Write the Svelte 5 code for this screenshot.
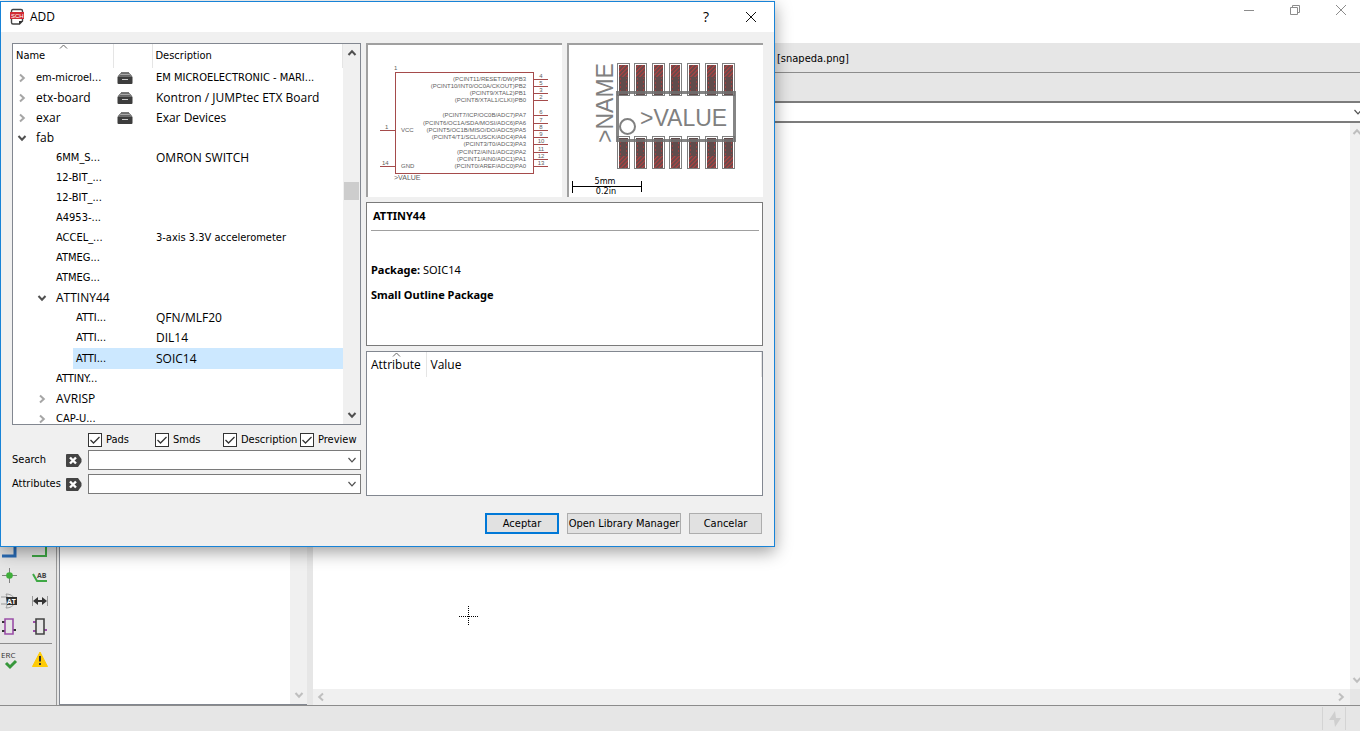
<script>
  const rows = [
    { name: 'em-microel...', level: 0, toggle: 'closed', lib: true, desc: 'EM MICROELECTRONIC - MARI...', small: true },
    { name: 'etx-board', level: 0, toggle: 'closed', lib: true, desc: 'Kontron / JUMPtec ETX Board' },
    { name: 'exar', level: 0, toggle: 'closed', lib: true, desc: 'Exar Devices' },
    { name: 'fab', level: 0, toggle: 'open' },
    { name: '6MM_S...', level: 1, desc: 'OMRON SWITCH' },
    { name: '12-BIT_...', level: 1 },
    { name: '12-BIT_...', level: 1 },
    { name: 'A4953-...', level: 1 },
    { name: 'ACCEL_...', level: 1, desc: '3-axis 3.3V accelerometer', small: true },
    { name: 'ATMEG...', level: 1 },
    { name: 'ATMEG...', level: 1 },
    { name: 'ATTINY44', level: 1, toggle: 'open' },
    { name: 'ATTI...', level: 2, desc: 'QFN/MLF20' },
    { name: 'ATTI...', level: 2, desc: 'DIL14' },
    { name: 'ATTI...', level: 2, desc: 'SOIC14', selected: true },
    { name: 'ATTINY...', level: 1 },
    { name: 'AVRISP', level: 1, toggle: 'closed' },
    { name: 'CAP-U...', level: 1, toggle: 'closed' }
  ];

  const pins = [
    [34, '(PCINT11/RESET/DW)PB3', '4'],
    [41, '(PCINT10/INT0/OC0A/CKOUT)PB2', '5'],
    [48, '(PCINT9/XTAL2)PB1', '3'],
    [55, '(PCINT8/XTAL1/CLKI)PB0', '2'],
    [70, '(PCINT7/ICP/OC0B/ADC7)PA7', '6'],
    [78, '(PCINT6/OC1A/SDA/MOSI/ADC6)PA6', '7'],
    [85, '(PCINT5/OC1B/MISO/DO/ADC5)PA5', '8'],
    [92, '(PCINT4/T1/SCL/USCK/ADC4)PA4', '9'],
    [99, '(PCINT3/T0/ADC3)PA3', '10'],
    [107, '(PCINT2/AIN1/ADC2)PA2', '11'],
    [114, '(PCINT1/AIN0/ADC1)PA1', '12'],
    [121, '(PCINT0/AREF/ADC0)PA0', '13']
  ];

  const padXs = [48, 65, 83, 100, 118, 136, 153];
  let filters = $state([
    { label: 'Pads', on: true },
    { label: 'Smds', on: true },
    { label: 'Description', on: true },
    { label: 'Preview', on: true }
  ]);
  const fields = ['Search', 'Attributes'];
</script>

{#snippet chevron(dir)}
  <svg class="chev" width="10" height="10" viewBox="0 0 10 10" aria-hidden="true">
    {#if dir === 'up'}<path d="M1.5 7 5 3.2 8.5 7" />
    {:else if dir === 'down'}<path d="M1.5 3 5 6.8 8.5 3" />
    {:else if dir === 'left'}<path d="M7 1.5 3.2 5 7 8.5" />
    {:else}<path d="M3 1.5 6.8 5 3 8.5" />{/if}
  </svg>
{/snippet}

<div class="app">
  <header class="titlebar">
    <button aria-label="Minimize"><svg width="12" height="12"><path d="M1 6.5h10" /></svg></button>
    <button aria-label="Restore"><svg width="12" height="12"><path d="M1.5 3.5h7v7h-7zM3.5 3.5v-2h7v7h-2" /></svg></button>
    <button aria-label="Close"><svg width="12" height="12"><path d="M1 1l10 10M11 1L1 11" /></svg></button>
  </header>
  <div class="bar path"><span>[snapeda.png]</span></div>
  <div class="bar tools"></div>
  <div class="command">
    <input type="text" aria-label="Command line" />
    <button aria-label="Command history">{@render chevron('down')}</button>
  </div>

  <div class="workspace">
    <nav class="toolbox">
      <div class="tool-grid">
        <button aria-label="Bus"><svg width="20" height="20" viewBox="0 0 20 20"><path d="M2 15h13V0" fill="none" stroke="#2a6db8" stroke-width="3" /></svg></button>
        <button aria-label="Net"><svg width="20" height="20" viewBox="0 0 20 20"><path d="M2 15h14V0" fill="none" stroke="#3fa845" stroke-width="2" /></svg></button>
        <button aria-label="Junction"><svg width="20" height="20" viewBox="0 0 20 20"><path d="M9.500 2v15M2 9.500h15" stroke="#808080" /><circle cx="9.500" cy="9.500" r="3.300" fill="#3fae3a" /></svg></button>
        <button aria-label="Label"><svg width="20" height="20" viewBox="0 0 20 20"><path d="M3 8l4 7h10" fill="none" stroke="#3fa845" stroke-width="2" /><text x="7" y="12" font-size="7" font-weight="bold" fill="#444">AB</text></svg></button>
        <button aria-label="Attribute"><svg width="20" height="20" viewBox="0 0 20 20"><path d="M1 6h6M1 13h6M6 3c6 0 9 4 9 7s-3 7-9 7c2-4 2-10 0-14" fill="none" stroke="#999" /><path d="M6 6h11v8H7z" fill="#2f2f2f" /><text x="7" y="13" font-size="7" font-weight="bold" fill="#fff">AT</text></svg></button>
        <button aria-label="Dimension"><svg width="20" height="20" viewBox="0 0 20 20"><path d="M2.500 5v10M17.500 5v10" stroke="#999" /><path d="M3 10l5-4v3h4V6l5 4-5 4v-3H8v3z" fill="#333" /></svg></button>
        <button aria-label="Gate"><svg width="20" height="20" viewBox="0 0 20 20"><path d="M2 6h3M2 15h3M13 14h3" stroke="#333" stroke-width="2" /><path d="M5 3h8v15H5z" fill="none" stroke="#9b4fa8" stroke-width="1.600" /></svg></button>
        <button aria-label="Part"><svg width="20" height="20" viewBox="0 0 20 20"><path d="M3 6h3M3 15h3M14 14h3" stroke="#9b4fa8" stroke-width="2" /><path d="M6 3h8v15H6z" fill="none" stroke="#444" stroke-width="1.600" /></svg></button>
      </div>
      <hr />
      <div class="tool-grid">
        <button aria-label="Electrical rule check"><svg width="20" height="20" viewBox="0 0 20 20"><text x="1" y="8" font-size="8" fill="#333">ERC</text><path d="M6 13l4 4 6-6" fill="none" stroke="#37973b" stroke-width="3" /></svg></button>
        <button aria-label="Errors"><svg width="20" height="20" viewBox="0 0 20 20"><path d="M10 2l7.500 14.500h-15z" fill="#ffcb05" stroke="#ffcb05" stroke-linejoin="round" /><path d="M10 6v5.500M10 13v2" stroke="#333" stroke-width="2" /></svg></button>
      </div>
    </nav>
    <section class="sheets">
      <div class="vscroll pale"><span class="grow"></span>{@render chevron('down')}</div>
    </section>
    <main class="canvas">
      <div class="board">
        <svg class="cursor" width="20" height="20" viewBox="0 0 20 20"><path d="M9.500 0v20M0 10.500h20" stroke="#000" stroke-dasharray="1 1" /></svg>
      </div>
      <div class="vscroll pale slim">{@render chevron('up')}<span class="grow"></span>{@render chevron('down')}</div>
      <div class="hscroll">{@render chevron('left')}<span class="grow"></span>{@render chevron('right')}</div>
      <div class="corner"></div>
    </main>
  </div>
  <footer class="status">
    <span><svg width="14" height="18" viewBox="0 0 14 18"><path d="M7 1L1 10h5l1 7 6-9H8z" fill="#cfcfcf" /></svg></span>
  </footer>

  <div class="dialog" role="dialog" aria-labelledby="dialog-title">
    <div class="dialog-title">
      <svg width="16" height="18" viewBox="0 0 16 18" aria-hidden="true">
        <path d="M4 1.500h8q1.500 0 1.500 1.500v10l-3 3H4q-1.500 0-1.500-1.500V3Q2.500 1.500 4 1.500z" fill="#fff" stroke="#444" stroke-width="1.400" />
        <path d="M10 16.500v-3.500h4z" fill="#333" />
        <rect x="1" y="4" width="14" height="7" fill="#d02a35" />
        <text x="2" y="10" font-size="6" fill="#fff">SCH</text>
      </svg>
      <h1 id="dialog-title">ADD</h1>
      <button class="help" aria-label="Help">?</button>
      <button aria-label="Close dialog"><svg width="12" height="12"><path d="M1 1l10 10M11 1L1 11" /></svg></button>
    </div>

    <div class="dialog-body">
      <div class="left">
        <div class="tree">
          <div class="tree-rows">
            <table>
              <colgroup><col class="c-name" /><col class="c-icon" /><col /></colgroup>
              <thead class="small">
                <tr><th><svg class="sort" width="9" height="5"><path d="M1 4.500l3.500-3.500 3.500 3.500" /></svg>Name</th><th></th><th>Description</th></tr>
              </thead>
              <tbody>
                {#each rows as r}
                  <tr class:selected={r.selected}>
                    <td>
                      <div class="node level{r.level}">
                        <span class="toggle {r.toggle ?? ''}">
                          {#if r.toggle}{@render chevron(r.toggle === 'open' ? 'down' : 'right')}{/if}
                        </span>
                        <span class="label" class:small={r.name.endsWith('...')}>{r.name}</span>
                      </div>
                    </td>
                    <td>
                      {#if r.lib}
                        <svg class="drawer" width="16" height="14" viewBox="0 0 16 14"><path d="M4 1.500h8" stroke="#777" /><path d="M1 5.500l2.500-3h9l2.500 3z" fill="#aaa" stroke="#555" stroke-width=".8" /><path d="M2.500 4.500h11" stroke="#666" /><path d="M.500 6h15v6q0 1-1 1h-13q-1 0-1-1z" fill="#3d3d3d" /><path d="M5 8.500h6" stroke="#ccc" /></svg>
                      {/if}
                    </td>
                    <td class:small={r.small}>{r.desc ?? ''}</td>
                  </tr>
                {/each}
              </tbody>
            </table>
          </div>
          <div class="vscroll">{@render chevron('up')}<span class="space"></span><span class="thumb"></span><span class="grow"></span>{@render chevron('down')}</div>
        </div>

        <div class="filters small">
          {#each filters as f}
            <label><input type="checkbox" bind:checked={f.on} />{f.label}</label>
          {/each}
        </div>
        {#each fields as f}
          <div class="field small">
            <label for="f-{f}">{f}</label>
            <button aria-label="Clear {f}"><svg width="16" height="13" viewBox="0 0 16 13"><path d="M1 0h11l3.500 5v3L12 13H1q-1 0-1-1V1q0-1 1-1z" fill="#444" /><path d="M4 3.500l6 6M10 3.500l-6 6" stroke="#fff" stroke-width="2.400" /></svg></button>
            <div class="combo">
              <select id="f-{f}"><option></option></select>
              {@render chevron('down')}
            </div>
          </div>
        {/each}
      </div>

      <div class="right">
        <div class="previews">
          <div class="preview">
            <svg viewBox="0 0 194 151" role="img" aria-label="Symbol preview">
              <g class="wire">
                <rect x="27.500" y="27.500" width="138" height="101" />
                {#each pins as [y]}<path d="M166 {y + 0.5}h14" />{/each}
                <path d="M12 85.500h15M12 121.500h15" />
              </g>
              <g class="sym">
                <text x="26" y="25">1</text>
                {#each pins as [y, name, no]}
                  <text x="158" y={y + 2} text-anchor="end">{name}</text>
                  <text x="173" y={y - 1} text-anchor="middle">{no}</text>
                {/each}
                <text x="17" y="84">1</text>
                <text x="14" y="120">14</text>
                <text x="33" y="87">VCC</text>
                <text x="33" y="123">GND</text>
                <text class="val" x="26" y="135">&gt;VALUE</text>
              </g>
            </svg>
          </div>
          <div class="preview">
            <svg viewBox="0 0 194 151" role="img" aria-label="Package preview">
              <defs>
                <pattern id="hatch" width="3" height="3" patternUnits="userSpaceOnUse" patternTransform="rotate(45)">
                  <rect width="3" height="3" fill="#6a4a4a" /><path d="M0 0v3" stroke="#b84040" stroke-width="2" />
                </pattern>
              </defs>
              {#each padXs as x}
                <rect x={x + 0.5} y="18.500" width="12" height="32" class="pad" />
                <rect x={x + 2} y="20" width="9" height="12" fill="url(#hatch)" />
                <rect x={x + 2} y="32" width="9" height="18" fill="#604c4c" />
                <path d="M{x + 3.5} 33v15.500h6V33" class="dots" />
                <rect x={x + 0.5} y="91.500" width="12" height="32" class="pad" />
                <rect x={x + 2} y="93" width="9" height="18" fill="#604c4c" />
                <path d="M{x + 3.5} 110V94.500h6v15.500" class="dots" />
                <rect x={x + 2} y="111" width="9" height="12" fill="url(#hatch)" />
              {/each}
              <rect x="48.500" y="47.500" width="117" height="48" class="body" />
              <circle cx="58.500" cy="81.500" r="7.500" fill="none" stroke="#808080" stroke-width="2" />
              <g class="pkg">
                <text x="71" y="81">&gt;VALUE</text>
                <text transform="translate(44 98) rotate(-90)">&gt;NAME</text>
              </g>
              <path d="M3.500 136v12M72.500 136v11M3 141.500h70" stroke="#000" />
              <g class="scale"><text x="36" y="139">5mm</text><text x="37" y="149">0.2in</text></g>
            </svg>
          </div>
        </div>

        <div class="info">
          <h2>ATTINY44</h2>
          <hr />
          <p><b>Package:</b> SOIC14</p>
          <p><b>Small Outline Package</b></p>
        </div>

        <div class="attrs">
          <table>
            <thead><tr><th><svg class="sort" width="9" height="5"><path d="M1 4.500l3.500-3.500 3.500 3.500" /></svg>Attribute</th><th>Value</th></tr></thead>
          </table>
        </div>

        <div class="actions small">
          <button class="primary">Aceptar</button>
          <button class="wide">Open Library Manager</button>
          <button>Cancelar</button>
        </div>
      </div>
    </div>
  </div>
</div>

<style>
  :global(body) { margin: 0; overflow: hidden; }
  .app, .app * { box-sizing: border-box; }
  .app {
    position: relative;
    display: flex;
    flex-direction: column;
    height: 100vh;
    background: #e6e6e6;
    color: #000;
    font: 12px/16px "Open Sans", "Noto Sans", sans-serif;
  }
  button { padding: 0; border: 0; background: none; font: inherit; color: inherit; }
  svg { display: block; }
  .chev path { fill: none; stroke: #505050; stroke-width: 2; }
  .grow { flex: 1; }
  .small, .path { font: 11px/16px "DejaVu Sans Condensed", "DejaVu Sans", sans-serif; }

  .titlebar { display: flex; justify-content: flex-end; gap: 34px; height: 43px; padding: 4px 13px; background: #fff; }
  .titlebar button { height: 12px; }
  .titlebar path { fill: none; stroke: #8c8c8c; }
  .bar { height: 28px; flex: none; }
  .path { height: 30px; padding: 8px 0 0 777px; border-bottom: 1px solid #8c8c8c; }
  .command { display: flex; align-items: center; height: 22px; border: 2px solid #7c7c7c; border-width: 2px 0; background: #fff; flex: none; }
  .command input { flex: 1; border: 0; outline: 0; padding: 0 4px; height: 18px; }
  .command .chev path, .combo .chev path { stroke-width: 1.2; }
  .command button { margin-right: -3px; }

  .workspace { display: flex; flex: 1; min-height: 0; }
  .toolbox { display: flex; flex-direction: column; justify-content: flex-end; width: 57px; padding-bottom: 35px; border-right: 1px solid #999; }
  .tool-grid { display: grid; grid-template-columns: 20px 20px; gap: 5px 10px; }
  .tool-grid text { font-family: "Open Sans", sans-serif; }
  .toolbox hr { width: 52px; margin: 7px 0 6px; border: 0; border-top: 1px solid #8c8c8c; }
  .sheets { display: flex; justify-content: flex-end; width: 248px; margin-left: 2px; border: 1px solid #828790; border-right: 0; background: #fff; }
  .canvas { display: grid; grid-template: 1fr 16px / 1fr 10px; flex: 1; margin-left: 6px; background: #fff; overflow: hidden; }
  .board { position: relative; }
  .cursor { position: absolute; left: 146px; top: 483px; }
  .vscroll { display: flex; flex-direction: column; align-items: center; width: 17px; padding: 4px 0; background: #f0f0f0; }
  .vscroll .chev { flex: none; }
  .pale .chev path, .hscroll .chev path { stroke: #bfbfbf; }
  .slim { width: 10px; align-items: flex-start; padding-left: 2px; }
  .hscroll { display: flex; align-items: center; padding: 0 4px 0 3px; background: #f0f0f0; }
  .corner { background: #e6e6e6; }
  .status { display: flex; justify-content: flex-end; height: 26px; padding: 1px 14px; border-top: 1px solid #8c8c8c; flex: none; }
  .status span { display: flex; align-items: center; padding: 0 3px 0 5px; border: 1px solid #d4d4d4; border-width: 0 1px; }

  .dialog { position: absolute; left: 0; top: 1px; width: 775px; border: 1px solid #1883d7; background: #f0f0f0; box-shadow: 0 5px 16px rgba(0, 0, 0, .38); }
  .dialog-title { display: flex; align-items: center; height: 30px; padding: 0 17px 0 8px; background: #fff; }
  .dialog-title h1 { flex: 1; margin: 0 0 0 5px; font: inherit; }
  .dialog-title text { font-family: "Liberation Sans", sans-serif; }
  .help { margin-right: 36px; font-size: 14px; }
  .dialog-title button path { stroke: #111; }
  .dialog-body { display: grid; grid-template-columns: 349fr 397fr; gap: 5px; padding: 11px 11px 12px; }

  .tree { display: flex; height: 382px; border: 1px solid #828790; background: #fff; }
  .tree-rows { flex: 1; overflow: hidden; }
  table { border-collapse: collapse; }
  .tree table { width: 100%; table-layout: fixed; }
  .c-name { width: 100px; }
  .c-icon { width: 39px; }
  th { position: relative; height: 24px; padding: 0 3px; border-right: 1px solid #e5e5e5; text-align: left; font-weight: normal; }
  .sort { position: absolute; top: 0; left: 50%; margin-left: -4px; }
  .sort path { fill: none; stroke: #666; }
  td { height: 20px; padding: 0; white-space: nowrap; overflow: hidden; }
  td:nth-child(2) { padding-left: 4px; }
  td:last-child { padding-left: 4px; }
  .node { display: flex; align-items: center; }
  .level1 { padding-left: 20px; }
  .level2 { padding-left: 40px; }
  .toggle { width: 20px; padding-left: 4px; }
  .closed :global(path) { stroke: #a6a6a6; }
  .label { flex: 1; padding-left: 3px; line-height: 20px; }
  .selected td { height: 21px; }
  .selected .label, .selected td:not(:first-child) { background: #cce8ff; }
  .selected .label { line-height: 21px; }
  .tree .space { height: 124px; }
  .thumb { width: 15px; height: 18px; background: #cdcdcd; }

  .filters { display: grid; grid-template-columns: 67px 68px 77px auto; padding: 7px 0 2px 76px; }
  .filters label { display: flex; align-items: center; gap: 4px; white-space: nowrap; }
  .filters input { appearance: none; width: 14px; height: 14px; margin: 0; border: 1px solid #333; background: #fff; }
  .filters input:checked { background: #fff url("data:image/svg+xml,%3Csvg xmlns='http://www.w3.org/2000/svg' viewBox='0 0 12 12'%3E%3Cpath d='M1.500 6l3 3L10.500 3' fill='none' stroke='%23333' stroke-width='1.300'/%3E%3C/svg%3E"); }
  .field { display: grid; grid-template-columns: 54px 22px 1fr; align-items: center; margin-bottom: 4px; }
  .field button { height: 13px; }
  .combo { position: relative; }
  .combo select { display: block; appearance: none; width: 100%; height: 20px; border: 1px solid #7a7a7a; border-radius: 0; background: #fff; }
  .combo .chev { position: absolute; right: 4px; top: 5px; pointer-events: none; }

  .right { display: flex; flex-direction: column; gap: 5px; }
  .previews { display: grid; grid-template-columns: 1fr 1fr; gap: 5px; }
  .preview { height: 154px; border: 2px solid #a0a0a0; border-width: 2px 0 0 2px; background: #fff; }
  .preview svg { width: 100%; overflow: visible; }
  .wire { fill: none; stroke: #a54b4b; }
  .sym { font: 6px "Liberation Sans", sans-serif; fill: #606060; }
  .val { font-size: 7px; }
  .pad { fill: #fff; stroke: #808080; }
  .body { fill: none; stroke: #707070; stroke-width: 3; stroke-opacity: .85; }
  .dots { fill: none; stroke: #a04040; stroke-dasharray: 2 2; }
  .pkg { font: 23px "Liberation Sans", sans-serif; fill: #808080; }
  .scale { font: 9px "DejaVu Sans Condensed", sans-serif; text-anchor: middle; }

  .info { height: 144px; padding: 5px 3px 0 4px; border: 1px solid #7a7a7a; background: #fff; font: 11px/16px "Noto Sans", sans-serif; }
  .info h2 { margin: 0 0 6px 2px; font-size: 11px; }
  .info hr { margin: 0 0 31px; border: 0; border-top: 1px solid #a0a0a0; }
  .info p { margin: 0 0 9px; }
  .attrs { height: 145px; border: 1px solid #828790; background: #fff; }
  .attrs table { width: 100%; }
  .attrs th { height: 25px; padding: 0 4px; }
  .attrs th:first-child { width: 59px; }

  .actions { display: flex; justify-content: flex-end; gap: 8px; padding: 12px 1px 0 0; }
  .actions button { width: 73px; height: 21px; border: 1px solid #adadad; background: #e1e1e1; white-space: nowrap; }
  .actions .primary { width: 74px; border: 2px solid #0078d7; }
  .actions .wide { width: 114px; }
</style>
